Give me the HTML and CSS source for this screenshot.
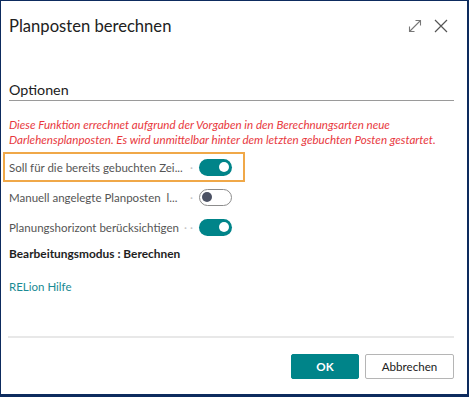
FILE: index.html
```html
<!DOCTYPE html>
<html lang="de">
<head>
<meta charset="utf-8">
<link rel="stylesheet" href="styles.css">
</head>
<body>
<div class="dialog">
  <div class="header">
    <div class="title">Planposten berechnen</div>
    <div class="hicons">
      <svg class="ico" width="14" height="14" viewBox="0 0 14 14"><path d="M1.5 12.5 L12.5 1.5 M7.5 1.5 H12.5 V6.5 M1.5 7.5 V12.5 H6.5" fill="none" stroke="#777" stroke-width="1.1"/></svg>
      <svg class="ico" width="14" height="14" viewBox="0 0 14 14"><path d="M1 1 L13 13 M13 1 L1 13" fill="none" stroke="#555" stroke-width="1.2"/></svg>
    </div>
  </div>
  <div class="content">
    <div class="section-title">Optionen</div>
    <p class="info">Diese Funktion errechnet aufgrund der Vorgaben in den Berechnungsarten neue Darlehensplanposten. Es wird unmittelbar hinter dem letzten gebuchten Posten gestartet.</p>
    <div class="row first focus">
      <div class="label"><span class="ltext">Soll für die bereits gebuchten Zei...</span><span class="dots">·</span></div>
      <span class="toggle on"><span class="knob"></span></span>
    </div>
    <div class="row">
      <div class="label"><span class="ltext">Manuell angelegte Planposten &nbsp;l...</span><span class="dots">·</span></div>
      <span class="toggle off"><span class="knob"></span></span>
    </div>
    <div class="row">
      <div class="label"><span class="ltext">Planungshorizont berücksichtigen</span><span class="dots">· ·</span></div>
      <span class="toggle on"><span class="knob"></span></span>
    </div>
    <div class="mode">Bearbeitungsmodus : Berechnen</div>
    <a class="help" href="#">RELion Hilfe</a>
  </div>
  <div class="footer">
    <button class="btn primary">OK</button>
    <button class="btn secondary">Abbrechen</button>
  </div>
</div>
</body>
</html>
```
FILE: styles.css
```css
html, body { margin: 0; padding: 0; background: #fff; }
.dialog {
  width: 469px; height: 397px; box-sizing: border-box;
  border-style: solid; border-color: #0d2b5e; border-width: 1px 2px 3px 1px;
  display: flex; flex-direction: column;
  font-family: "Lato", "Open Sans", sans-serif;
  color: #212121;
}
.header {
  height: 50px; display: flex; align-items: center; justify-content: space-between;
  padding: 0 19px 0 8px; flex: none;
}
.title { font-size: 16.6px; color: #212121; }
.hicons { display: flex; gap: 12px; align-items: center; }
.ico { display: block; }
.content { padding: 0 13px 0 8px; display: flex; flex-direction: column; align-items: flex-start; }
.section-title {
  align-self: stretch; margin-top: 28px; font-size: 14.3px; line-height: 21px;
  border-bottom: 1px solid #9a9a9a;
}
.info {
  margin: 17px 0 0; font-size: 11.6px; line-height: 14.5px; font-style: italic; color: #e8383d;
}
.row {
  box-sizing: border-box; width: 242px; height: 30px; margin-left: -6px; padding-left: 4px;
  border: 2px solid transparent; display: flex; align-items: center;
}
.row.first { margin-top: 5px; }
.row.focus { border-color: #f0a848; }
.label { width: 184px; display: flex; justify-content: space-between; align-items: center; font-size: 11.5px; color: #555; white-space: nowrap; }
.dots { color: #c4c4c4; }
.toggle {
  box-sizing: border-box; width: 33px; height: 17px; border-radius: 9px; margin-left: 6px;
  display: flex; align-items: center; padding: 0 3px;
}
.toggle.on { background: #008489; justify-content: flex-end; }
.toggle.off { background: #fff; border: 1px solid #8c8c8c; justify-content: flex-start; padding: 0 2px; }
.knob { width: 10px; height: 10px; border-radius: 50%; }
.on .knob { background: #fff; }
.off .knob { background: #4b5163; }
.mode { margin-top: 4px; font-size: 11.9px; line-height: 16px; font-weight: 700; color: #1e1e1e; }
.help { margin-top: 17px; font-size: 11.5px; line-height: 16px; color: #1a8a93; text-decoration: none; }
.footer {
  margin: auto 13px 0 7px; border-top: 2px solid #e8e8e8; padding: 16px 0 15px;
  display: flex; justify-content: flex-end; gap: 6px;
}
.btn {
  height: 25px; box-sizing: border-box; font-family: "Lato", "Open Sans", sans-serif;
  font-size: 11.6px; border-radius: 2px; padding: 0; cursor: pointer;
}
.primary { width: 68px; background: #008489; border: 1px solid #008489; color: #fff; font-weight: 700; }
.secondary { width: 89px; background: #fff; border: 1px solid #b5b5b5; color: #212121; }
```
